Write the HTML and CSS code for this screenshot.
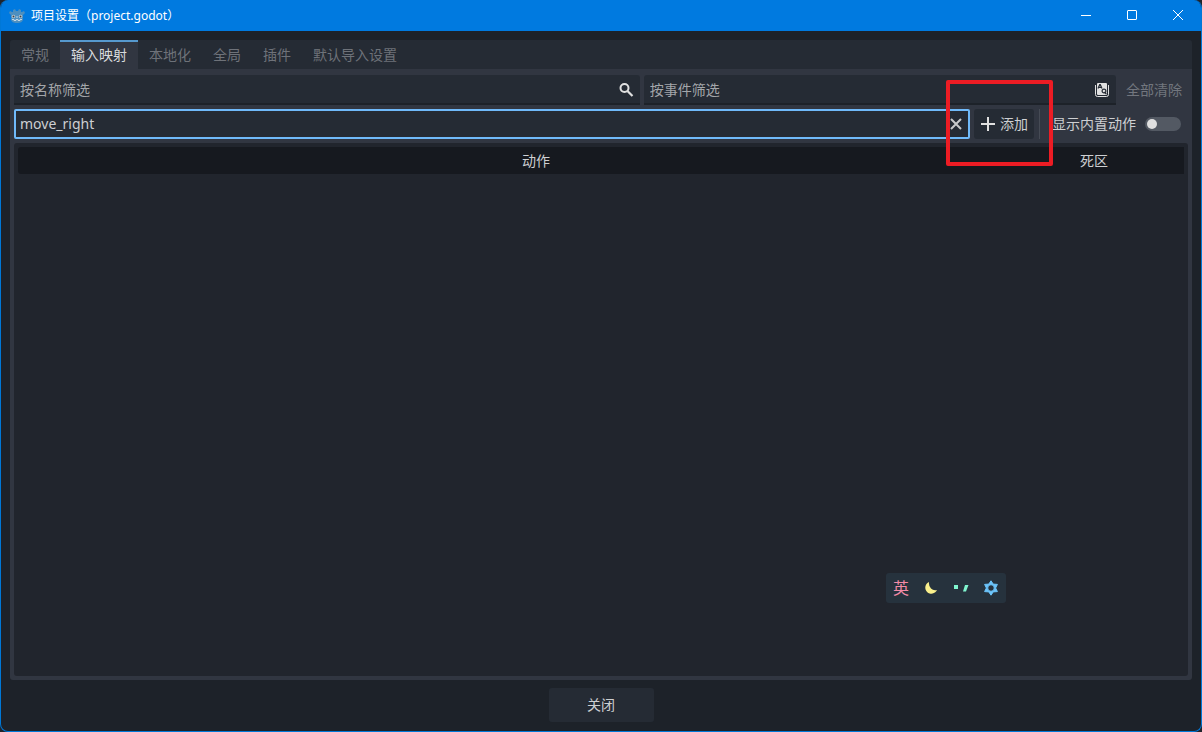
FILE: index.html
```html
<!DOCTYPE html>
<html lang="zh-CN">
  <head>
    <meta charset="UTF-8" />
    <meta name="viewport" content="width=device-width, initial-scale=1.0" />
    <title>项目设置（project.godot）</title>
    <link rel="stylesheet" href="styles.css">
  </head>
  <body>
    <div class="window">
      <!-- 标题栏 -->
      <header class="titlebar">
        <svg class="app-icon" viewBox="0 0 16 16" aria-hidden="true">
          <path fill="#4d8fbf" d="M6 1l1 2h2l1-2 2 1v2l1 0 2-1 1 2-2 2v4c0 3-3 4-6 4s-6-1-6-4V7L0 5l1-2 2 1h1V2z" />
          <circle cx="4.500" cy="8.500" r="1.700" fill="#c3d6e3" />
          <circle cx="11.500" cy="8.500" r="1.700" fill="#c3d6e3" />
          <circle cx="4.500" cy="8.500" r="1" fill="#414042" />
          <circle cx="11.500" cy="8.500" r="1" fill="#414042" />
          <path fill="none" stroke="#c3d6e3" d="M3 11.500h2v1h2v-1h2v1h2v-1h2M8 8v2" />
        </svg>
        <h1>项目设置（project.godot）</h1>
        <div class="window-buttons">
          <button type="button" aria-label="最小化">
            <svg viewBox="0 0 12 12"><path d="M1 5.500h10" /></svg>
          </button>
          <button type="button" aria-label="最大化">
            <svg viewBox="0 0 12 12"><rect x="1.500" y="0.500" width="9" height="9" rx="0.500" /></svg>
          </button>
          <button type="button" aria-label="关闭窗口">
            <svg viewBox="0 0 12 12"><path d="M1 0l10 10M11 0L1 10" /></svg>
          </button>
        </div>
      </header>

      <main>
        <!-- 选项卡 -->
        <nav class="tabs">
          <button type="button">常规</button>
          <button type="button" class="active">输入映射</button>
          <button type="button">本地化</button>
          <button type="button">全局</button>
          <button type="button">插件</button>
          <button type="button">默认导入设置</button>
        </nav>

        <section class="panel">
          <div class="row">
            <div class="field by-name">
              <input type="text" placeholder="按名称筛选" aria-label="按名称筛选" />
              <svg class="icon" viewBox="0 0 16 16" aria-hidden="true">
                <circle cx="6.500" cy="6" r="4" fill="none" stroke="#e0e0e0" stroke-width="2" />
                <path d="M9.500 9l5 5" stroke="#e0e0e0" stroke-width="2.200" />
              </svg>
            </div>
            <div class="field by-event">
              <input type="text" placeholder="按事件筛选" aria-label="按事件筛选" />
              <svg class="icon" viewBox="0 0 16 16" aria-hidden="true">
                <path d="M1.500 3v9.500q0 2 2 2h9q2 0 2-2V3" fill="none" stroke="#e0e0e0" />
                <rect x="3" y="1" width="10" height="12" rx="1" fill="#e0e0e0" />
                <path d="M4 6.500l1.700-4h.6l1.700 4M4.700 5.300h2.600" fill="none" stroke="#252b34" stroke-width="1.200" />
                <circle cx="10" cy="9" r="1.900" fill="none" stroke="#252b34" stroke-width="1.200" />
                <path d="M10.500 10l1.800 2" stroke="#252b34" stroke-width="1.200" />
              </svg>
            </div>
            <button type="button" class="clear-all" disabled>全部清除</button>
          </div>

          <div class="row">
            <div class="field action-name">
              <input type="text" value="move_right" aria-label="添加新动作" />
              <button type="button" class="clear" aria-label="清除">
                <svg class="icon" viewBox="0 0 16 16"><path d="M3 3l10 10M13 3L3 13" stroke="#c8c9cb" stroke-width="2" /></svg>
              </button>
            </div>
            <div class="add-wrap">
              <button type="button" class="add">
                <svg class="icon" viewBox="0 0 16 16" aria-hidden="true"><path d="M8 1v14M1 8h14" stroke="#e0e0e0" stroke-width="2" /></svg>
                添加
              </button>
              <span class="highlight"></span>
            </div>
            <span class="separator"></span>
            <label class="builtin">
              显示内置动作
              <input type="checkbox" />
            </label>
          </div>

          <!-- 动作列表 -->
          <div class="action-list">
            <table>
              <thead>
                <tr>
                  <th>动作</th>
                  <th class="deadzone">死区</th>
                  <th class="tools"></th>
                </tr>
              </thead>
            </table>
          </div>
        </section>
      </main>

      <footer>
        <button type="button">关闭</button>
      </footer>
    </div>

    <!-- 输入法状态条 -->
    <aside class="ime">
      <span class="ime-lang">英</span>
      <svg viewBox="0 0 16 16" aria-hidden="true">
        <path fill="#faf08c" d="M6 2a6.100 6.100 0 1 0 8 8Q10.500 11 8 8.500T6 2z" />
      </svg>
      <svg viewBox="0 0 16 16" aria-hidden="true">
        <path fill="#80f5cf" d="M1 5h4v4H1zM12 5h3.500l-2.500 6.500h-3z" />
      </svg>
      <svg viewBox="0 0 16 16" aria-hidden="true">
        <path fill="#6cc4fa" fill-rule="evenodd" stroke="#6cc4fa" stroke-linejoin="round" d="M8 0.800l2.200 3.300 4.200.300L12.600 8l1.800 3.600-4.200.300L8 15.200l-2.200-3.300-4.200-.300L3.400 8 1.600 4.400l4.200-.300zM8 4.700a3.300 3.300 0 1 0 0 6.600 3.300 3.300 0 0 0 0-6.600z" />
      </svg>
    </aside>
  </body>
</html>
```

FILE: styles.css
```css
* {
  box-sizing: border-box;
}

body {
  margin: 0;
  background: #20242b;
  color: #cdcfd2;
  font-family: "Noto Sans", "Noto Sans CJK SC", sans-serif;
  font-size: 14px;
  line-height: 20px;
}

button,
input {
  margin: 0;
  padding: 0;
  border: none;
  background: none;
  color: inherit;
  font: inherit;
}

svg {
  display: block;
}

.window {
  display: flex;
  flex-direction: column;
  min-height: 100vh;
  border: 1px solid #0078d7;
  border-top: none;
  border-radius: 8px;
  background: #1d2229;
  overflow: hidden;
}

/* 标题栏 */
.titlebar {
  display: flex;
  align-items: center;
  height: 31px;
  padding-left: 8px;
  background: #007ae0;
  color: #fff;
}

.app-icon {
  width: 16px;
  height: 16px;
  margin-right: 6px;
}

.titlebar h1 {
  flex: 1;
  margin: 0;
  font-size: 12px;
  font-weight: 400;
}

.window-buttons {
  display: flex;
}

.window-buttons button {
  display: flex;
  align-items: center;
  justify-content: center;
  width: 46px;
  height: 31px;
}

.window-buttons svg {
  width: 12px;
  height: 12px;
  fill: none;
  stroke: #fff;
}

main {
  flex: 1;
  display: flex;
  flex-direction: column;
  margin: 9px 9px 0;
}

/* 选项卡 */
.tabs {
  display: flex;
  height: 29px;
  border-radius: 3px 3px 0 0;
  background: #252b34;
}

.tabs button {
  padding: 0 11px 2px;
  border-top: 2px solid transparent;
  color: #6e7279;
}

.tabs .active {
  border-top-color: #5699ce;
  background: #313641;
  color: #d8dadd;
}

.panel {
  flex: 1;
  display: flex;
  flex-direction: column;
  gap: 4px;
  padding: 6px 4px 4px;
  border-radius: 0 0 3px 3px;
  background: #313641;
}

.row {
  display: flex;
  gap: 4px;
  height: 30px;
}

/* 输入框 */
.field {
  display: flex;
  align-items: center;
  padding: 0 6px;
  border-radius: 3px 3px 0 0;
  background: #252b34;
  box-shadow: inset 0 -2px #1d2229;
}

.field input {
  flex: 1;
  min-width: 0;
  outline: none;
}

.field input::placeholder {
  color: #a3a6aa;
  opacity: 1;
}

.icon {
  width: 16px;
  height: 16px;
}

.by-name {
  flex: 4;
}

.by-event {
  flex: 3;
}

.clear-all {
  padding: 0 6px;
  color: #72767e;
}

.action-name {
  flex: 1;
  padding: 0 4px;
  border: 2px solid #70bafa;
  border-radius: 2px;
  box-shadow: none;
}

.add-wrap {
  position: relative;
}

.add {
  display: flex;
  align-items: center;
  gap: 4px;
  height: 30px;
  padding: 0 6px;
  border-radius: 3px;
  background: #252b34;
}

/* 围住"添加"按钮的红框 */
.highlight {
  position: absolute;
  inset: -29px -19px -27px -28px;
  border: 4px solid #ed1c24;
  border-radius: 2px;
  pointer-events: none;
}

.separator {
  width: 1px;
  margin-left: 1px;
  background: #464b55;
}

.builtin {
  display: flex;
  align-items: center;
  gap: 9px;
  padding: 0 7px 0 8px;
}

.builtin input {
  appearance: none;
  display: flex;
  align-items: center;
  width: 36px;
  height: 14px;
  padding: 0 2px;
  border-radius: 7px;
  background: #535963;
}

.builtin input::before {
  content: "";
  width: 10px;
  height: 10px;
  border-radius: 50%;
  background: #e0e0e0;
}

/* 动作列表 */
.action-list {
  flex: 1;
  padding: 4px;
  border-radius: 3px;
  background: #21252d;
}

table {
  width: 100%;
  border-collapse: collapse;
  table-layout: fixed;
}

th {
  height: 27px;
  padding: 0;
  background: #16191f;
  font-weight: 400;
}

th:first-child {
  border-radius: 3px 0 0 3px;
}

.deadzone {
  width: 80px;
}

.tools {
  width: 50px;
}

footer {
  display: flex;
  justify-content: center;
  padding: 8px 0 9px;
}

footer button {
  width: 105px;
  height: 34px;
  border-radius: 3px;
  background: #252b34;
}

/* 输入法状态条，浮在窗口之上 */
.ime {
  position: fixed;
  right: 196px;
  bottom: 129px;
  display: flex;
  align-items: center;
  justify-content: space-around;
  width: 120px;
  height: 30px;
  border-radius: 3px;
  background: #26323d;
}

.ime-lang {
  color: #f28ba8;
  font-size: 16px;
}

.ime svg {
  width: 16px;
  height: 16px;
}
```
